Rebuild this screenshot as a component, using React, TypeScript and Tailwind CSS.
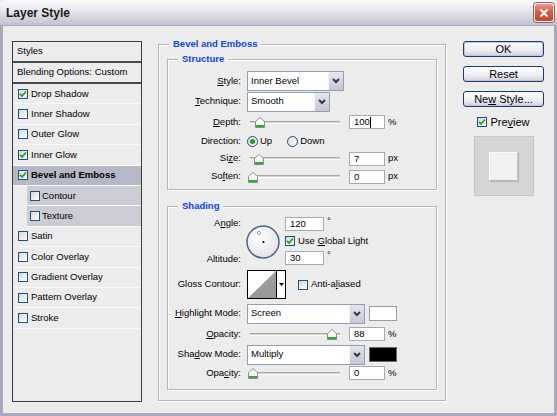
import type { FC, ReactNode } from "react";

// small XP-ish widgets
const Check: FC<{ on?: boolean }> = ({ on }) => (
  <span className="w-[10px] h-[10px] shrink-0 border border-[#1c5180] bg-[linear-gradient(135deg,#d8d8d2,#ffffff)] flex items-center justify-center">
    {on && (
      <svg width="8" height="8" viewBox="0 0 8 8">
        <path d="M1 3.8 L3 6 L7 1.5" fill="none" stroke="#21a121" strokeWidth="1.8" />
      </svg>
    )}
  </span>
);

const Radio: FC<{ on?: boolean }> = ({ on }) => (
  <span className="w-[11px] h-[11px] shrink-0 rounded-full border border-[#1c5180] bg-[linear-gradient(135deg,#d8d8d2,#ffffff)] flex items-center justify-center">
    {on && <span className="w-[5px] h-[5px] rounded-full bg-[#21a121]" />}
  </span>
);

const Slider: FC<{ at: number }> = ({ at }) => (
  <div className="relative w-[96px] h-[12px] shrink-0 flex items-center">
    <div className="mx-[3px] flex-1 h-[3px] border-t border-[#a9a89e] bg-[#d4d3ca] border-b border-b-white" />
    <svg className="absolute top-[1px]" style={{ left: at }} width="10" height="11" viewBox="0 0 10 11">
      <path d="M0.5 4.5 L5 0.5 L9.5 4.5 V10.5 H0.5 Z" fill="#fafafa" stroke="#8c8c8c" />
      <rect x="1" y="8" width="8" height="2" fill="#28b028" />
    </svg>
  </div>
);

const Field: FC<{ value: string; className?: string; caret?: boolean }> = ({ value, className, caret }) => (
  <span className={`h-[14px] shrink-0 bg-white border border-[#a3aab4] flex items-center pl-[4px] leading-none ${className ?? "w-[36px]"}`}>
    {value}
    {caret && <span className="w-px h-[11px] bg-black" />}
  </span>
);

const Select: FC<{ text: string; className: string }> = ({ text, className }) => (
  <div className={`h-[20px] shrink-0 bg-white border border-[#8f9fb8] flex items-center ${className}`}>
    <span className="flex-1 pl-[3px]">{text}</span>
    <span className="w-[15px] h-full bg-[linear-gradient(#e6e6ee,#c6c6d4)] border-l border-[#f4f4f8] flex items-center justify-center">
      <svg width="8" height="6" viewBox="0 0 8 6">
        <path d="M1 1 L4 4 L7 1" fill="none" stroke="#35354d" strokeWidth="2" />
      </svg>
    </span>
  </div>
);

const Label: FC<{ children: ReactNode }> = ({ children }) => (
  <span className="w-[73px] shrink-0 text-right">{children}</span>
);

const Btn: FC<{ children: ReactNode; main?: boolean }> = ({ children, main }) => (
  <button
    className={`h-[16px] w-full rounded-[3px] border border-[#1d3c6e] bg-[linear-gradient(#ffffff,#ececf2_60%,#cfd0dc)] text-[11px] leading-none text-black ${
      main ? "shadow-[inset_0_0_0_1px_#b8c8ea]" : "shadow-[inset_0_-1px_0_#c2c2d0]"
    }`}
  >
    {children}
  </button>
);

type Item = { name: string; on?: boolean; sub?: boolean; active?: boolean };

const items: Item[] = [
  { name: "Drop Shadow", on: true },
  { name: "Inner Shadow" },
  { name: "Outer Glow" },
  { name: "Inner Glow", on: true },
  { name: "Bevel and Emboss", on: true, active: true },
  { name: "Contour", sub: true },
  { name: "Texture", sub: true },
  { name: "Satin" },
  { name: "Color Overlay" },
  { name: "Gradient Overlay" },
  { name: "Pattern Overlay" },
  { name: "Stroke" },
];

const legend = "bg-[#ececec] px-[4px] text-[#1144dd] font-bold leading-[12px]";
const box = "border border-[#b4b4b4] shadow-[inset_1px_1px_0_#fff,1px_1px_0_#fff]";

export default function App() {
  return (
    <div className="w-[557px] h-[416px] flex flex-col bg-[#ececec] font-['Liberation_Sans',Arial,sans-serif] text-[9.5px] text-black">
      {/* title bar */}
      <div className="h-[26px] shrink-0 rounded-t-[6px] border-b border-[#a9a9bd] bg-[linear-gradient(#fbfbfd,#ebebf1_35%,#d4d4e0_72%,#c2c2d2)] flex items-center justify-between pl-[6px] pr-[3px]">
        <span className="text-[12px] font-bold text-[#1a1a1a]">Layer Style</span>
        <div className="w-[20px] h-[19px] rounded-[3px] border border-white bg-[linear-gradient(#ea9a86,#d65a40_50%,#c3442b)] shadow-[0_0_0_1px_#b0584a] flex items-center justify-center">
          <svg width="10" height="10" viewBox="0 0 10 10">
            <path d="M1.5 1.5 L8.5 8.5 M8.5 1.5 L1.5 8.5" stroke="#fff" strokeWidth="2" />
          </svg>
        </div>
      </div>

      {/* body */}
      <div className="flex-1 flex border-x-[3px] border-b-[3px] border-[#a9a9bd] pl-[9px] pt-[15px]">
        {/* styles list */}
        <div className="w-[130px] h-[361px] shrink-0 border border-[#3c3c3c] flex flex-col">
          <div className="h-[21px] shrink-0 border-b-2 border-[#4a4a4a] flex items-center pl-[4px]">Styles</div>
          <div className="h-[21px] shrink-0 border-b-2 border-[#4a4a4a] flex items-center pl-[4px]">Blending Options: Custom</div>
          {items.map((it) => (
            <div
              key={it.name}
              className={`h-[20.4px] shrink-0 border-b border-[#fafafa] flex items-center ${
                it.sub ? "ml-[14px] pl-[3px] gap-[2px] bg-[#cbccd6]" : "pl-[5px] gap-[3px]"
              } ${it.active ? "bg-[#b6b8c8] font-bold" : ""}`}
            >
              <Check on={it.on} />
              <span>{it.name}</span>
            </div>
          ))}
        </div>

        {/* main panel */}
        <fieldset className={`ml-[16px] mt-[-3px] w-[288px] h-[363px] shrink-0 px-[8px] pt-[2px] ${box}`}>
          <legend className={`ml-[2px] ${legend}`}>Bevel and Emboss</legend>

          <fieldset className={`mt-px w-[270px] pb-[3px] ${box}`}>
            <legend className={`ml-[10px] ${legend}`}>Structure</legend>
            <div className="mt-[6px] h-[20px] flex items-center gap-[6px]">
              <Label><u>S</u>tyle:</Label>
              <Select text="Inner Bevel" className="w-[97px]" />
            </div>
            <div className="h-[21px] flex items-center gap-[6px]">
              <Label><u>T</u>echnique:</Label>
              <Select text="Smooth" className="w-[83px]" />
            </div>
            <div className="h-[20px] flex items-center gap-[6px]">
              <Label><u>D</u>epth:</Label>
              <Slider at={8} />
              <Field value="100" caret />
              <span className="-ml-[3px]">%</span>
            </div>
            <div className="h-[18px] flex items-center">
              <Label>Direction:</Label>
              <span className="ml-[6px] flex items-center gap-[2px]">
                <Radio on />
                <span>Up</span>
              </span>
              <span className="ml-[15px] flex items-center gap-[2px]">
                <Radio />
                <span>Down</span>
              </span>
            </div>
            <div className="h-[17px] flex items-center gap-[6px]">
              <Label>Si<u>z</u>e:</Label>
              <Slider at={7} />
              <Field value="7" />
              <span className="-ml-[3px]">px</span>
            </div>
            <div className="h-[19px] flex items-center gap-[6px]">
              <Label>So<u>f</u>ten:</Label>
              <Slider at={1} />
              <Field value="0" />
              <span className="-ml-[3px]">px</span>
            </div>
          </fieldset>

          <fieldset className={`mt-[10px] w-[270px] pb-[7px] ${box}`}>
            <legend className={`ml-[10px] ${legend}`}>Shading</legend>

            <div className="mt-[4px] h-[50px] flex">
              <div className="w-[73px] shrink-0 flex flex-col justify-between items-end pb-px leading-[13px]">
                <span>A<u>n</u>gle:</span>
                <span>Altitude:</span>
              </div>
              <svg className="ml-[5px] mt-[9px] shrink-0" width="34" height="34" viewBox="0 0 34 34">
                <defs>
                  <radialGradient id="dial" cx="40%" cy="35%" r="70%">
                    <stop offset="0" stopColor="#ffffff" />
                    <stop offset="1" stopColor="#e2e2e6" />
                  </radialGradient>
                </defs>
                <circle cx="17" cy="17" r="16" fill="url(#dial)" stroke="#4f6189" strokeWidth="1.5" />
                <circle cx="17.5" cy="17" r="1.1" fill="#000" />
                <path d="M13 6 V7 M13 9 V10 M11 8 H12 M14 8 H15" stroke="#333" strokeWidth="1" />
              </svg>
              <div className="ml-[5px] flex flex-col justify-between py-px">
                <div className="flex items-start gap-[3px]">
                  <Field value="120" className="w-[39px]" />
                  <span className="leading-[8px]">°</span>
                </div>
                <div className="flex items-center gap-[3px]">
                  <Check on />
                  <span>Use <u>G</u>lobal Light</span>
                </div>
                <div className="flex items-start gap-[3px]">
                  <Field value="30" className="w-[39px]" />
                  <span className="leading-[8px]">°</span>
                </div>
              </div>
            </div>

            <div className="mt-[4px] h-[29px] flex items-center">
              <Label>Gloss Contour:</Label>
              <div className="ml-[6px] w-[39px] h-[29px] shrink-0 border border-black bg-white flex">
                <svg width="28" height="27" viewBox="0 0 28 27">
                  <polygon points="0,27 28,0 28,27" fill="#9a9a9a" />
                </svg>
                <div className="flex-1 border-l border-black flex items-center justify-center">
                  <svg width="5" height="3" viewBox="0 0 5 3">
                    <polygon points="0,0 5,0 2.5,3" fill="#000" />
                  </svg>
                </div>
              </div>
              <span className="ml-[12px] flex items-center gap-[3px]">
                <Check />
                <span>Anti-a<u>l</u>iased</span>
              </span>
            </div>

            <div className="mt-[5px] h-[19px] flex items-center gap-[6px]">
              <Label><u>H</u>ighlight Mode:</Label>
              <Select text="Screen" className="w-[118px] h-[19px]" />
              <span className="-ml-[2px] w-[28px] h-[15px] bg-white border border-[#9c9c9c]" />
            </div>
            <div className="h-[22px] flex items-center gap-[6px]">
              <Label><u>O</u>pacity:</Label>
              <Slider at={80} />
              <Field value="88" />
              <span className="-ml-[3px]">%</span>
            </div>
            <div className="h-[19px] flex items-center gap-[6px]">
              <Label>Sha<u>d</u>ow Mode:</Label>
              <Select text="Multiply" className="w-[118px] h-[19px]" />
              <span className="-ml-[2px] w-[28px] h-[15px] bg-black border border-[#6a6a6a]" />
            </div>
            <div className="h-[18px] flex items-center gap-[6px]">
              <Label>Opa<u>c</u>ity:</Label>
              <Slider at={1} />
              <Field value="0" />
              <span className="-ml-[3px]">%</span>
            </div>
          </fieldset>
        </fieldset>

        {/* buttons */}
        <div className="ml-[17px] w-[81px] shrink-0 flex flex-col">
          <div className="flex flex-col gap-[9px]">
            <Btn main>OK</Btn>
            <Btn>Reset</Btn>
            <Btn>Ne<u>w</u> Style...</Btn>
          </div>
          <div className="mt-[9px] h-[12px] flex items-center justify-center gap-[3px] text-[11px]">
            <Check on />
            <span>Pre<u>v</u>iew</span>
          </div>
          <div className="mt-[8px] mx-auto w-[60px] h-[60px] bg-[#d5d5d5] border border-[#c6c6c6] flex items-center justify-center">
            <div className="w-[29px] h-[29px] bg-[#f1f1f1] border border-[#fafafa] border-b-[#b4b4b4] border-r-[#c2c2c2] shadow-[1px_1px_1px_#b8b8b8]" />
          </div>
        </div>
      </div>
    </div>
  );
}
